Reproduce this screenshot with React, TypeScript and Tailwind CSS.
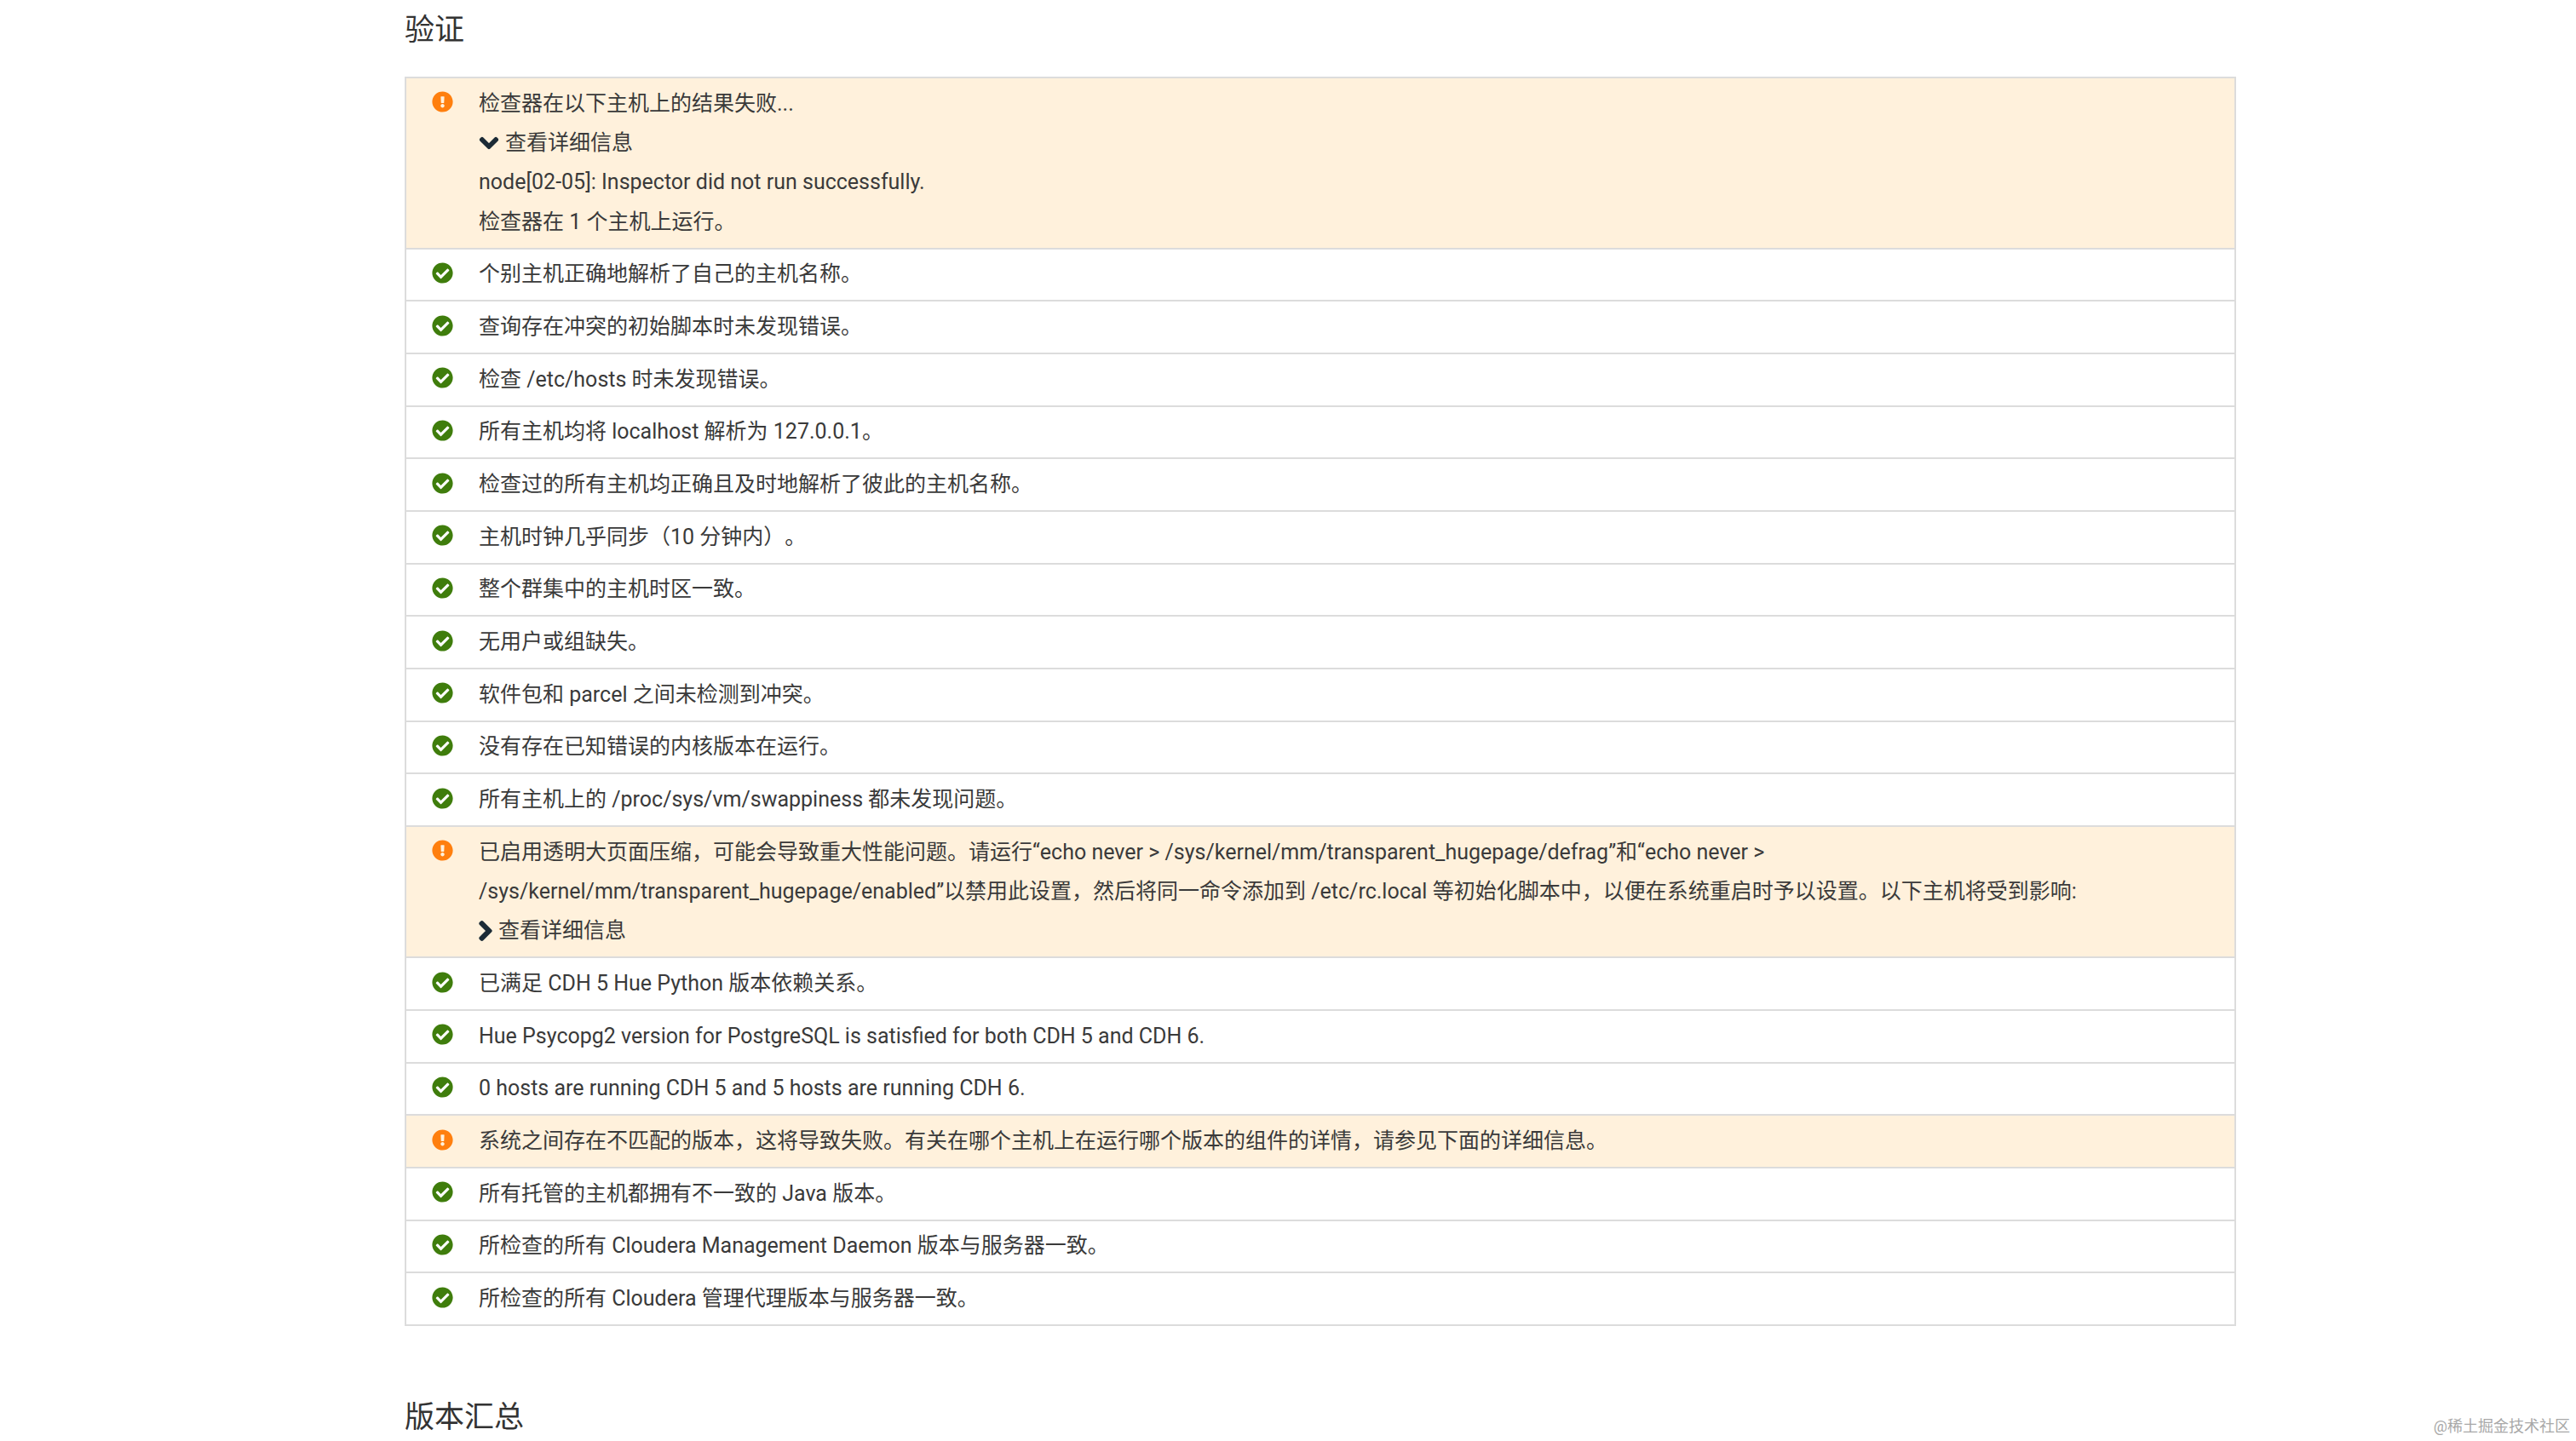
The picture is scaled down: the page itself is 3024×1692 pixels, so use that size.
import { FaCheckCircle, FaChevronDown, FaChevronRight, FaExclamationCircle } from "react-icons/fa";
import type { ReactNode } from "react";

const Row = ({ warn, children }: { warn?: boolean; children: ReactNode }) => (
  <div className={`flex gap-[30px] border-b-2 border-[#dcdcdc] pl-[30px] pr-[40px] py-[6.7px] ${warn ? "bg-[#fff1dc]" : "bg-white"}`}>
    <div className="h-[46.3px] w-[25px] flex items-center justify-center shrink-0">
      {warn ? (
        <FaExclamationCircle className="w-[25px] h-[25px] text-[#ff7f0e] -translate-y-[2px]" />
      ) : (
        <FaCheckCircle className="w-[25px] h-[25px] text-[#3f7d0c] -translate-y-[2px]" />
      )}
    </div>
    <div className="min-w-0 flex-1">{children}</div>
  </div>
);

const Details = ({ open }: { open?: boolean }) => (
  <div className="flex items-center">
    {open ? (
      <FaChevronDown stroke="currentColor" strokeWidth={40} className="w-[24px] h-[24px] text-[#1c2b36] mr-[7px]" />
    ) : (
      <FaChevronRight stroke="currentColor" strokeWidth={40} className="w-[16px] h-[26px] text-[#1c2b36] mr-[7px]" />
    )}
    <span>查看详细信息</span>
  </div>
);

const okRows1 = [
  "个别主机正确地解析了自己的主机名称。",
  "查询存在冲突的初始脚本时未发现错误。",
  "检查 /etc/hosts 时未发现错误。",
  "所有主机均将 localhost 解析为 127.0.0.1。",
  "检查过的所有主机均正确且及时地解析了彼此的主机名称。",
  "主机时钟几乎同步（10 分钟内）。",
  "整个群集中的主机时区一致。",
  "无用户或组缺失。",
  "软件包和 parcel 之间未检测到冲突。",
  "没有存在已知错误的内核版本在运行。",
  "所有主机上的 /proc/sys/vm/swappiness 都未发现问题。",
];

const okRows2 = [
  "已满足 CDH 5 Hue Python 版本依赖关系。",
  "Hue Psycopg2 version for PostgreSQL is satisfied for both CDH 5 and CDH 6.",
  "0 hosts are running CDH 5 and 5 hosts are running CDH 6.",
];

const okRows3 = [
  "所有托管的主机都拥有不一致的 Java 版本。",
  "所检查的所有 Cloudera Management Daemon 版本与服务器一致。",
  "所检查的所有 Cloudera 管理代理版本与服务器一致。",
];

export default function App() {
  return (
    <div className="relative h-[1692px] overflow-hidden bg-white pl-[475px] pr-[399px] text-[#3a3a3a] font-['Roboto','Noto_Sans_CJK_SC',sans-serif] text-[25px] leading-[46.3px] font-normal [text-spacing-trim:space-all]">
      <h2 className="h-[90px] pt-[13px] text-[35px] leading-[46px] font-normal text-[#333]">验证</h2>

      <div className="border-2 border-b-0 border-[#dcdcdc]">
        <Row warn>
          <div>检查器在以下主机上的结果失败...</div>
          <Details open />
          <div>node[02-05]: Inspector did not run successfully.</div>
          <div>检查器在 1 个主机上运行。</div>
        </Row>
        {okRows1.map((t) => (
          <Row key={t}>{t}</Row>
        ))}
        <Row warn>
          <div>
            已启用透明大页面压缩，可能会导致重大性能问题。请运行“echo never &gt; /sys/kernel/mm/transparent_hugepage/defrag”和“echo never &gt; /sys/kernel/mm/transparent_hugepage/enabled”以禁用此设置，然后将同一命令添加到 /etc/rc.local 等初始化脚本中，以便在系统重启时予以设置。以下主机将受到影响:
          </div>
          <Details />
        </Row>
        {okRows2.map((t) => (
          <Row key={t}>{t}</Row>
        ))}
        <Row warn>系统之间存在不匹配的版本，这将导致失败。有关在哪个主机上在运行哪个版本的组件的详情，请参见下面的详细信息。</Row>
        {okRows3.map((t) => (
          <Row key={t}>{t}</Row>
        ))}
      </div>

      <h2 className="mt-[85px] text-[35px] leading-[46px] font-normal text-[#333]">版本汇总</h2>

      <div className="absolute right-[7px] bottom-[6px] text-[18px] leading-[22px] text-[#a8a8a8]">@稀土掘金技术社区</div>
    </div>
  );
}
